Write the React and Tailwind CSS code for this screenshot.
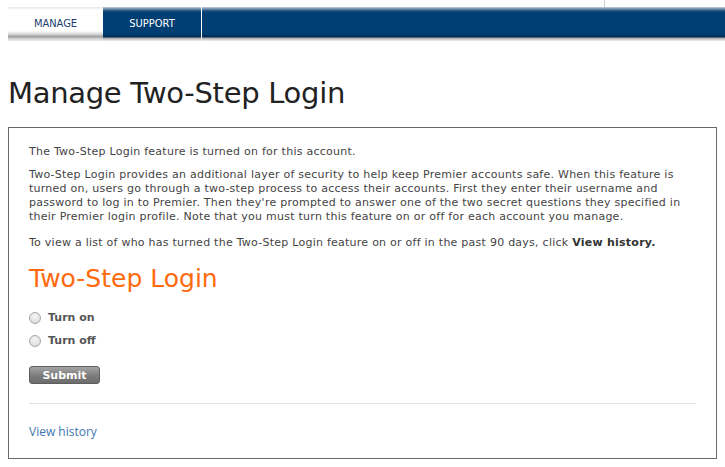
import React from "react";

const body = "font-['DejaVu_Sans',sans-serif]";
const narrow = "font-['DejaVu_Sans_Condensed','DejaVu_Sans',sans-serif]";

export default function App() {
  return (
    <div className={`relative w-[725px] h-[467px] bg-white text-[#444] ${body}`}>
      {/* thin rule above the nav on the right */}
      <div className="absolute left-[604px] top-0 h-[7px] w-px bg-[#cfcfcf]" />

      <div className="pt-[7px] pl-[8px]">
        <nav className={`flex h-[34px] text-[11px] ${narrow}`}>
          <div className="w-[95px] flex items-start justify-center pt-[9px] text-[#20406f] bg-[linear-gradient(to_bottom,#e6e6e6_0px,#ffffff_3px,#ffffff_24px,#d8d8d8_27px,#9a9a9a_30px,#c8c8c8_31px,#ececec_34px)]">
            MANAGE
          </div>
          <div className="w-[98px] flex items-start justify-center pt-[9px] text-white bg-[linear-gradient(to_bottom,#c9ced4_0px,#6f8cab_2px,#1a4c7c_4px,#013e73_6px,#013e73_27px,#00284d_30px,#a9a9a9_31px,#d9d9d9_33px,#f2f2f2_34px)]">
            SUPPORT
          </div>
          <div className="w-px bg-[linear-gradient(to_bottom,#ffffff_0px,#ffffff_30px,#d9d9d9_31px,#f2f2f2_34px)]" />
          <div className="flex-1 bg-[linear-gradient(to_bottom,#c9ced4_0px,#6f8cab_2px,#1a4c7c_4px,#013e73_6px,#013e73_27px,#00284d_30px,#a9a9a9_31px,#d9d9d9_33px,#f2f2f2_34px)]" />
        </nav>
      </div>

      <h1 className="ml-[8px] mt-[34px] text-[29px] leading-[36px] tracking-[-0.3px] text-[#222]">
        Manage Two-Step Login
      </h1>

      <section className="ml-[8px] mt-[16px] w-[709px] h-[332px] border border-[#6a6a6a] px-[20px] pt-[17px]">
        <div className="text-[11px] leading-[14px] tracking-[0.25px]">
          <p>The Two-Step Login feature is turned on for this account.</p>
          <p className="mt-[9px]">
            Two-Step Login provides an additional layer of security to help keep Premier accounts safe. When this feature is
            <br />
            turned on, users go through a two-step process to access their accounts. First they enter their username and
            <br />
            password to log in to Premier. Then they're prompted to answer one of the two secret questions they specified in
            <br />
            their Premier login profile. Note that you must turn this feature on or off for each account you manage.
          </p>
          <p className="mt-[12px]">
            To view a list of who has turned the Two-Step Login feature on or off in the past 90 days, click{" "}
            <b className="text-[#333]">View history.</b>
          </p>
        </div>

        <h2 className="mt-[14px] text-[25px] leading-[30px] text-[#ff6a0e]">Two-Step Login</h2>

        <div className="mt-[17px] flex flex-col gap-[9px] text-[11px] font-bold text-[#555]">
          {["Turn on", "Turn off"].map((t) => (
            <label key={t} className="flex items-center gap-[7px] h-[14px]">
              <span className="w-[12px] h-[12px] rounded-full border border-[#a8a8a8] bg-[radial-gradient(circle_at_50%_35%,#f4f4f4,#d6d6d6)]" />
              {t}
            </label>
          ))}
        </div>

        <button className="block mt-[18px] w-[71px] h-[18px] rounded-[3px] border border-[#5e5e5e] bg-[linear-gradient(to_bottom,#a4a4a4,#7c7c7c_55%,#6c6c6c)] text-white text-[11px] font-bold leading-[15px]">
          Submit
        </button>

        <div className="mt-[19px] h-px bg-[#e2e2e2]" />

        <a className="block mt-[20px] text-[12px] leading-[16px] text-[#3d76b2] font-['Open_Sans',sans-serif]">
          View history
        </a>
      </section>
    </div>
  );
}
